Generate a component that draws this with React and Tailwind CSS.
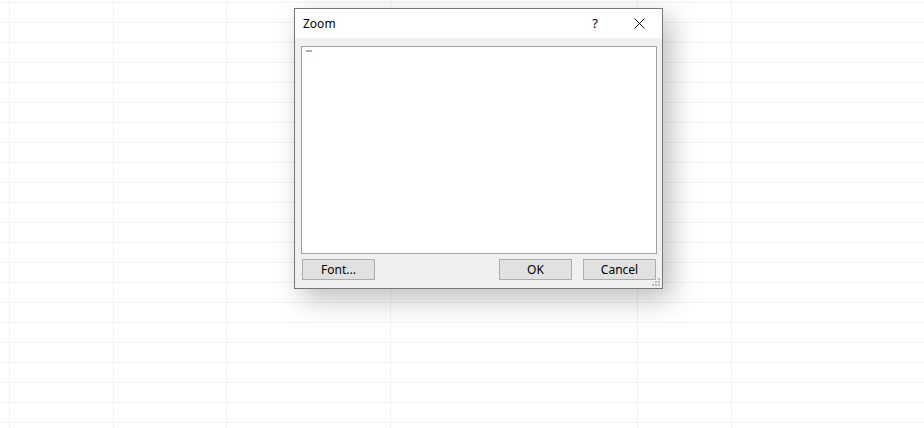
import React from "react";

/* Excel-style "Zoom" dialog floating over an empty sheet */

const COLUMNS = [10, 104, 113, 164, 247, 94];

function SheetGrid() {
    return (
        <div className="flex h-[428px] w-[924px] overflow-hidden bg-white">
            {COLUMNS.map((w, i) => (
                <div
                    key={i}
                    className="h-full shrink-0 border-r border-[#f2f2f2] bg-[repeating-linear-gradient(to_bottom,transparent_0px,transparent_2px,#f2f2f2_2px,#f2f2f2_3px,transparent_3px,transparent_20px)]"
                    style={{ width: w }}
                />
            ))}
            <div className="h-full flex-1 bg-[repeating-linear-gradient(to_bottom,transparent_0px,transparent_2px,#f2f2f2_2px,#f2f2f2_3px,transparent_3px,transparent_20px)]" />
        </div>
    );
}

function DialogButton({ children }) {
    return (
        <button className="h-[21px] w-[73px] border border-[#adadad] bg-[#e1e1e1] text-[12px] leading-none text-black">
            {children}
        </button>
    );
}

function ZoomDialog() {
    return (
        <div className="absolute left-[294px] top-[8px] flex h-[281px] w-[369px] flex-col border border-[#777777] bg-[#f0f0f0] shadow-[8px_10px_26px_rgba(0,0,0,0.26)]">
            <div className="flex h-[29px] shrink-0 items-center bg-white pl-[8px]">
                <span className="text-[12px] text-black">Zoom</span>
                <span className="ml-auto w-[14px] text-center text-[13px] text-black">?</span>
                <svg className="ml-[32px] mr-[17px]" width="11" height="11" viewBox="0 0 11 11">
                    <path d="M0.5 0.5 L10.5 10.5 M10.5 0.5 L0.5 10.5" stroke="#111" strokeWidth="1" />
                </svg>
            </div>

            <div className="relative flex flex-1 flex-col pl-[6px] pr-[5px] pt-[8px]">
                <div className="h-[208px] border border-[#a0a0a0] bg-white pl-[4px] pt-[3px]">
                    <div className="h-[2px] w-[6px] bg-[linear-gradient(to_right,#c8a48a,#a4a4d8,#8ab8d8)]" />
                </div>

                <div className="mt-[5px] flex items-center pl-[1px]">
                    <DialogButton>Font...</DialogButton>
                    <div className="ml-auto flex gap-[11px] pr-[1px]">
                        <DialogButton>OK</DialogButton>
                        <DialogButton>Cancel</DialogButton>
                    </div>
                </div>

                <svg className="absolute bottom-[1px] right-[1px]" width="9" height="9" viewBox="0 0 9 9">
                    <rect x="6" y="0" width="2" height="2" fill="#b8b8b8" />
                    <rect x="3" y="3" width="2" height="2" fill="#b8b8b8" />
                    <rect x="6" y="3" width="2" height="2" fill="#b8b8b8" />
                    <rect x="0" y="6" width="2" height="2" fill="#b8b8b8" />
                    <rect x="3" y="6" width="2" height="2" fill="#b8b8b8" />
                    <rect x="6" y="6" width="2" height="2" fill="#b8b8b8" />
                </svg>
            </div>
        </div>
    );
}

export default function App() {
    return (
        <div className="relative h-[428px] w-[924px] overflow-hidden font-['Noto_Sans','Open_Sans',sans-serif]">
            <SheetGrid />
            <ZoomDialog />
        </div>
    );
}
